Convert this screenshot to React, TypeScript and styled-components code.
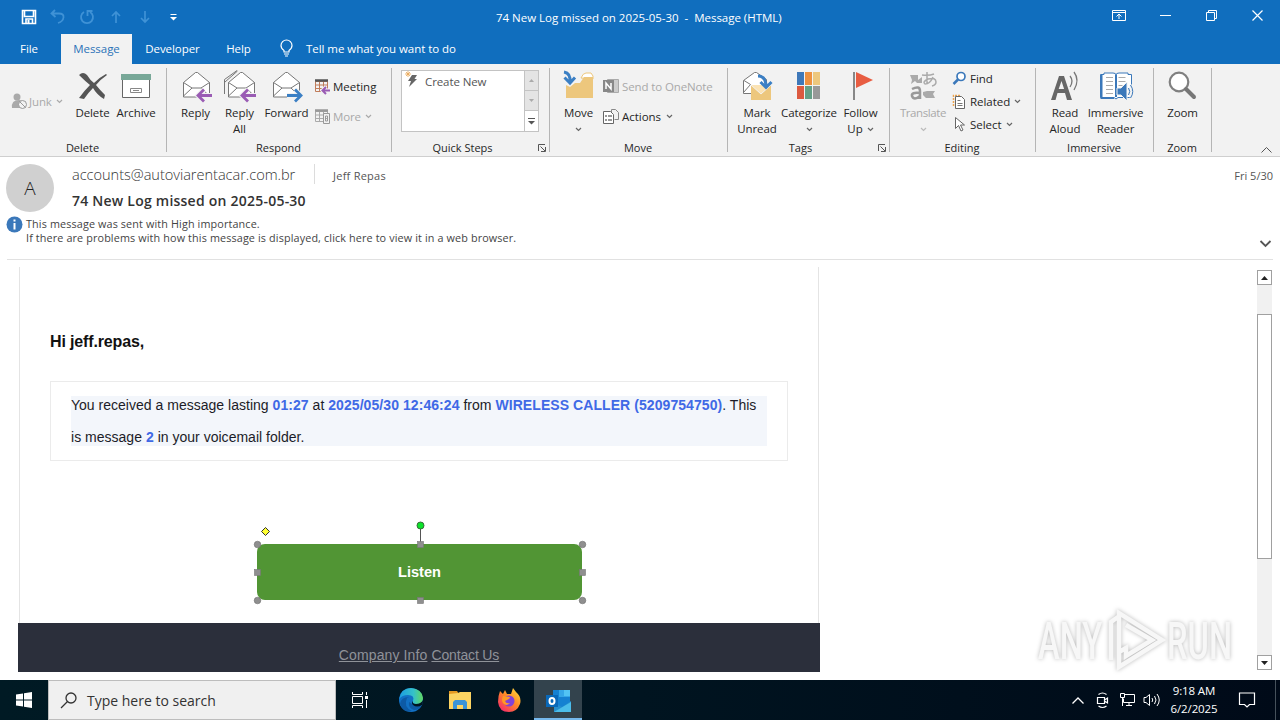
import type { ReactNode } from "react";
import styled, { createGlobalStyle, css } from "styled-components";

const GlobalStyle = createGlobalStyle`
  * {
    box-sizing: border-box;
  }

  body {
    margin: 0;
    background: #fff;
    font-family: "Open Sans", "Noto Sans", sans-serif;
    font-size: 12px;
    color: #262626;
  }

  svg {
    display: block;
    flex: none;
    overflow: visible;
  }
`;

const Window = styled.div`
  position: relative;
  display: flex;
  flex-direction: column;
  width: 1280px;
  height: 720px;
  overflow: hidden;
  white-space: nowrap;
`;

const TitleBar = styled.header`
  display: grid;
  grid-template-columns: 400px 1fr 400px;
  align-items: center;
  height: 34px;
  background: #106ebe;
  color: #fff;
`;

const QuickAccess = styled.div`
  display: flex;
  align-items: center;
  gap: 13px;
  padding-left: 21px;
`;

const WindowTitle = styled.div`
  padding-left: 96px;
  font-size: 11.5px;
  letter-spacing: -0.02px;
`;

const WindowControls = styled.div`
  display: flex;
  align-self: start;
  justify-content: flex-end;
  height: 30px;

  > * {
    display: grid;
    place-items: center;
    width: 46px;
  }
`;

const Tabs = styled.nav`
  display: flex;
  height: 30px;
  background: #106ebe;
  color: #fff;
  font-size: 11.5px;
  letter-spacing: -0.05px;
`;

const Tab = styled.div<{ $width: number; $active?: boolean }>`
  display: flex;
  align-items: center;
  justify-content: center;
  width: ${(p) => p.$width}px;
  padding-bottom: 2px;

  ${(p) =>
    p.$active &&
    css`
      background: #f2f2f2;
      color: #2b72b8;
    `}
`;

const TellMe = styled.div`
  display: flex;
  align-items: center;
  gap: 12px;
  padding: 0 0 2px 15px;
`;

const Ribbon = styled.section`
  display: flex;
  height: 93px;
  border-bottom: 1px solid #cfcfcf;
  background: #f2f2f2;
`;

const Group = styled.div<{ $width: number }>`
  position: relative;
  display: flex;
  flex-direction: column;
  width: ${(p) => p.$width}px;
  height: 84px;
  margin-top: 4px;
  border-right: 1px solid #b5b5b5;
`;

const GroupBody = styled.div<{ $indent: number }>`
  display: flex;
  height: 72px;
  padding: 2px 0 0 ${(p) => p.$indent}px;
`;

const GroupLabel = styled.div<{ $launcher?: boolean }>`
  height: 12px;
  padding-right: ${(p) => (p.$launcher ? 16 : 1)}px;
  font-size: 11px;
  line-height: 15px;
  text-align: center;
`;

const Launcher = styled.svg`
  position: absolute;
  right: 3px;
  bottom: 0;
`;

const BigButton = styled.div<{ $width: number; $disabled?: boolean }>`
  display: flex;
  flex-direction: column;
  align-items: center;
  width: ${(p) => p.$width}px;
  font-size: 11.5px;
  line-height: 16px;
  text-align: center;
  letter-spacing: ${(p) => (p.$disabled ? -0.4 : -0.08)}px;
  color: ${(p) => (p.$disabled ? "#a9a9a9" : "#262626")};

  > svg {
    margin-bottom: 3px;
  }
`;

const ButtonLine = styled.span`
  display: flex;
  align-items: center;
  justify-content: center;
  gap: 4px;
  height: 16px;
`;

const SmallColumn = styled.div<{ $row: number; $top: number; $width?: number; $indent?: number }>`
  display: flex;
  flex-direction: column;
  width: ${(p) => (p.$width ? `${p.$width}px` : "auto")};
  margin: ${(p) => p.$top}px 0 0 ${(p) => p.$indent ?? 0}px;

  > * {
    height: ${(p) => p.$row}px;
  }
`;

const SmallButton = styled.div<{ $disabled?: boolean; $tight?: boolean }>`
  display: flex;
  align-items: center;
  gap: ${(p) => (p.$tight ? 2 : 3)}px;
  font-size: 11.5px;
  letter-spacing: ${(p) => (p.$disabled ? -0.12 : -0.03)}px;
  color: ${(p) => (p.$disabled ? "#a9a9a9" : "#262626")};

  > svg:last-child:not(:first-child) {
    margin-left: 2px;
  }
`;

const QuickSteps = styled.div`
  display: flex;
  width: 138px;
  height: 62px;
  border: 1px solid #c3c3c3;
  background: #fff;
`;

const QuickStep = styled.div`
  display: flex;
  flex: 1;
  gap: 7px;
  padding-left: 3px;
  color: #555;
  font-size: 11.5px;
  letter-spacing: -0.1px;
  line-height: 22px;
`;

const Spinner = styled.div`
  display: grid;
  grid-template-rows: 20px 20px 1fr;
  width: 14px;
  border-left: 1px solid #c3c3c3;

  > div {
    display: grid;
    place-items: center;
    background: #e4e4e4;
    border-bottom: 1px solid #c3c3c3;
  }

  > div:last-child {
    background: #fff;
    border-bottom: 0;
  }
`;

const Collapse = styled.div`
  display: flex;
  flex: 1;
  align-items: flex-end;
  justify-content: flex-end;
  padding: 0 8px 3px 0;
`;

const MessageHeader = styled.section`
  display: flex;
  flex-direction: column;
  height: 103px;
  margin: 0 7px;
  padding-top: 7px;
  border-bottom: 1px solid #e1e1e1;
`;

const Sender = styled.div`
  display: flex;
  height: 49px;
`;

const Avatar = styled.div`
  display: grid;
  place-items: center;
  width: 48px;
  height: 48px;
  margin-left: -1px;
  border-radius: 50%;
  background: #d0d0d0;
  color: #222;
  font-size: 19px;
  font-weight: 300;
`;

const SenderLines = styled.div`
  flex: 1;
  margin-left: 18px;
`;

const FromLine = styled.div`
  display: flex;
  height: 22px;
  color: #555;
`;

const From = styled.span`
  width: 242px;
  font-size: 14.6px;
  font-weight: 300;
  line-height: 21px;
  letter-spacing: -0.04px;
  color: #333;
`;

const To = styled.span`
  flex: 1;
  height: 20px;
  padding-left: 18px;
  border-left: 1px solid #dcdcdc;
  font-size: 11px;
  line-height: 24px;
  letter-spacing: 0.25px;
`;

const SentOn = styled.span`
  font-size: 11px;
  line-height: 24px;
`;

const Subject = styled.div`
  font-size: 14px;
  font-weight: 600;
  line-height: 30px;
  letter-spacing: 0.23px;
  color: #333;
`;

const InfoBar = styled.div`
  display: flex;
  gap: 4px;
  margin-top: 4px;
  color: #444;
  font-size: 10.8px;
  line-height: 14px;
  letter-spacing: 0.13px;
`;

const InfoText = styled.div`
  flex: 1;
`;

const ExpandSlot = styled.div`
  align-self: flex-end;
  height: 5px;
  padding-right: 2px;
`;

const ReadingPane = styled.main`
  display: flex;
  height: 420px;
  padding: 7px 7px 8px 18px;
  font-family: "Liberation Sans", Arial, sans-serif;
`;

const Mail = styled.article`
  display: flex;
  flex-direction: column;
  width: 802px;
`;

const MailBody = styled.div`
  flex: 1;
  margin: 0 1px;
  padding: 66px 30px 0;
  border: solid #e4e4e4;
  border-width: 0 1px;
`;

const Greeting = styled.h1`
  margin: 0;
  color: #111;
  font-size: 16px;
  line-height: 18px;
  letter-spacing: -0.15px;
`;

const Notice = styled.div`
  height: 80px;
  margin-top: 30px;
  padding: 14px 20px 0;
  border: 1px solid #ebebeb;
`;

const NoticeFill = styled.div`
  display: flow-root;
  height: 50px;
  background: #f3f6fb;
`;

const NoticeText = styled.p`
  margin: -7px 0 0;
  color: #1c1c28;
  font-size: 14px;
  line-height: 32px;
  letter-spacing: 0.015px;

  b {
    color: #3f69e6;
    letter-spacing: 0.07px;
  }
`;

const ListenButton = styled.div`
  position: relative;
  width: 325px;
  height: 56px;
  margin: 83px 0 0 207px;
  border-radius: 8px;
  background: #519534;
  color: #fff;
  font-size: 14.6px;
  font-weight: bold;
  line-height: 56px;
  text-align: center;
`;

const Selection = styled.svg`
  position: absolute;
  left: -6px;
  top: -24px;
`;

const MailFooter = styled.footer`
  display: flex;
  justify-content: center;
  gap: 4px;
  height: 49px;
  background: #2b2f3b;
  color: #8f9299;
  font-size: 14px;
  line-height: 64px;
  text-decoration: underline;
`;

const FooterLink = styled.span<{ $spacing: number }>`
  letter-spacing: ${(p) => p.$spacing}px;
`;

const Scrollbar = styled.div`
  display: flex;
  flex-direction: column;
  width: 15px;
  height: 400px;
  margin: 3px 1px 0 auto;
  background: #f1f1f1;
`;

const ScrollArrow = styled.div`
  display: grid;
  place-items: center;
  height: 15px;
  border: 1px solid #a0a0a0;
  background: #fff;
`;

const ScrollThumb = styled.div`
  height: 245px;
  margin: 29px 0 auto;
  border: 1px solid #a0a0a0;
  background: #fff;
`;

const Watermark = styled.div`
  position: absolute;
  left: 1038px;
  top: 608px;
  display: flex;
  width: 198px;
  height: 66px;
  filter: drop-shadow(0 0 2px rgba(0, 0, 0, 0.28));
`;

const WatermarkWord = styled.span<{ $width: number; $scale: number }>`
  display: block;
  width: ${(p) => p.$width}px;
  color: #f7f7f7;
  font-family: Roboto, sans-serif;
  font-size: 51px;
  font-weight: 500;
  line-height: 67px;

  > span {
    display: inline-block;
    transform: scaleX(${(p) => p.$scale});
    transform-origin: 0 0;
  }
`;

const Taskbar = styled.footer`
  display: flex;
  height: 40px;
  background: linear-gradient(90deg, #001a24, #001420 50%, #000a18);
  color: #fff;
`;

const TaskItem = styled.div<{ $width: number; $active?: boolean }>`
  display: grid;
  place-items: center;
  width: ${(p) => p.$width}px;
  ${(p) =>
    p.$active &&
    css`
      padding-top: 2px;
      background: #33434d;
      border-bottom: 2px solid #76b9ed;
    `}
`;

const SearchBox = styled.div`
  display: flex;
  align-items: center;
  gap: 10px;
  width: 288px;
  padding-left: 11px;
  border: 1px solid #bdbdbd;
  background: #f0f0f0;
  color: #333;
  font-size: 14px;
`;

const Tray = styled.div`
  display: flex;
  align-items: center;
  margin-left: auto;
  padding-right: 4px;
`;

const TrayIcon = styled.div<{ $width: number }>`
  display: grid;
  place-items: center;
  width: ${(p) => p.$width}px;
`;

const Clock = styled.div`
  width: 62px;
  font-size: 11.5px;
  line-height: 18px;
  letter-spacing: -0.12px;
  text-align: center;
`;

const ShowDesktop = styled.div`
  height: 40px;
  border-left: 1px solid #46515b;
`;

type IconProps = { w?: number; h?: number; children: ReactNode };

// Stroke icon on its own pixel grid
const Icon = ({ w = 16, h = w, children }: IconProps) => (
  <svg width={w} height={h} viewBox={`0 0 ${w} ${h}`} fill="none" stroke="currentColor">
    {children}
  </svg>
);

const Chevron = ({ color = "#666" }: { color?: string }) => (
  <svg width="7" height="5" viewBox="0 0 7 5" fill="none" stroke={color} strokeWidth="1.2">
    <path d="M1 1l2.5 2.5L6 1" />
  </svg>
);

const LauncherIcon = () => (
  <Launcher width="8" height="8" viewBox="0 0 8 8" fill="none" stroke="#555">
    <path d="M.5 7V.5H7M2.5 2.5L7 7M7.5 3v4.5H3" />
  </Launcher>
);

const Envelope = ({ x = 0 }: { x?: number }) => (
  <g transform={`translate(${x} 0)`} stroke="#777">
    <path d="M3.5 12.5l12-10h2l12 10V27h-26z" fill="#fff" />
    <path d="M3.5 12.5l8.5 5.5h9l8.5-5.5M3.5 26l8.5-8M29.5 26L21 18" />
  </g>
);

const ReplyIcon = ({ all }: { all?: boolean }) => (
  <Icon w={32}>
    {all && <path d="M.5 24V9.5L13 .5M1 12L13.5 1" stroke="#777" />}
    <Envelope x={all ? 1 : 0} />
    <path d="M32 25.5H18M24 19.5l-6 6 6 6" stroke="#f2f2f2" strokeWidth="5" />
    <path d="M32 25.5H18M24 19.5l-6 6 6 6" stroke="#9a5cb4" strokeWidth="2.8" />
  </Icon>
);

const ForwardIcon = () => (
  <Icon w={32}>
    <Envelope x={-1} />
    <path d="M16 25.5h14M24 19.5l6 6-6 6" stroke="#f2f2f2" strokeWidth="5" />
    <path d="M16 25.5h14M24 19.5l6 6-6 6" stroke="#3b7fc4" strokeWidth="2.8" />
  </Icon>
);

const FolderIcon = () => (
  <Icon w={32}>
    <path d="M18 8q2-5 5-5h5l2 3v3z" fill="#fff" stroke="#edc77d" />
    <path d="M3 15l4 2 5-4h5l4-6h9v21H3z" fill="#edc77d" stroke="none" />
    <path d="M1 2q7 1 6 11M1.5 7.500L7 13l5-5.500" stroke="#3b7fc4" strokeWidth="3" />
  </Icon>
);

const CalendarIcon = ({ muted }: { muted?: boolean }) => (
  <Icon>
    <path d="M.5 3.5h12v10H.5zM.5 7h12M.5 10.5h12M4.5 4v9.5M8.5 4v9.5" stroke={muted ? "#aaa" : "#c07c5a"} />
    <path d="M0 2.5h13" stroke={muted ? "#999" : "#555"} strokeWidth="2.5" />
    {muted ? (
      <path d="M8.5 5.5h6v10h-6zM10.5 8v5h2V8z" fill="#f2f2f2" stroke="#999" />
    ) : (
      <>
        <path d="M15 12.5H8M11 9l-3.500 3.500L11 16" stroke="#f2f2f2" strokeWidth="4" />
        <path d="M15 12.5H8M11 9l-3.500 3.500L11 16" stroke="#9a5cb4" strokeWidth="2" />
      </>
    )}
  </Icon>
);

function Title() {
  return (
    <TitleBar>
      <QuickAccess>
        <Icon>
          <path d="M1.5 1.5h13v13h-13zM3.5 2v5.5h9V2M5 14v-4h6.500v4" strokeWidth="1.600" />
          <path d="M6.5 11h2v3h-2z" fill="#fff" stroke="none" />
        </Icon>
        <Icon>
          <path d="M5 1L1.5 4.5 5.5 8M1.5 4.5H9q5 0 4.5 4T8 14" stroke="#3f92d6" strokeWidth="1.800" />
        </Icon>
        <Icon>
          <path d="M5 3A6 6 0 1 0 11 3M13.5 2H8.500v5" stroke="#3f92d6" strokeWidth="1.800" />
        </Icon>
        <Icon>
          <path d="M8 14V3M4 7l4-4 4 4" stroke="#3f92d6" strokeWidth="1.700" />
        </Icon>
        <Icon>
          <path d="M8 2v11M4 9l4 4 4-4" stroke="#3f92d6" strokeWidth="1.700" />
        </Icon>
        <Icon>
          <path d="M4.5 5.5h6" />
          <path d="M4 8h7l-3.500 3.500z" fill="#fff" stroke="none" />
        </Icon>
      </QuickAccess>
      <WindowTitle>74 New Log missed on 2025-05-30 &nbsp;- &nbsp;Message (HTML)</WindowTitle>
      <WindowControls>
        <div>
          <Icon w={14} h={11}>
            <path d="M.5.5h13v10H.5zM.5 2.5h13M7 9V4.5M4.5 6.5L7 4l2.500 2.500" />
          </Icon>
        </div>
        <div>
          <Icon w={11}>
            <path d="M0 5.5h11" />
          </Icon>
        </div>
        <div>
          <Icon w={11}>
            <path d="M.5 2.5h8v8h-8zM2.5 2.5v-2h8v8h-2" />
          </Icon>
        </div>
        <div>
          <Icon w={11}>
            <path d="M.5.5l10 10M10.5.5l-10 10" strokeWidth="1.200" />
          </Icon>
        </div>
      </WindowControls>
    </TitleBar>
  );
}

function RibbonTabs() {
  return (
    <Tabs>
      <Tab $width={58}>File</Tab>
      <Tab $width={3} />
      <Tab $width={71} $active>
        Message
      </Tab>
      <Tab $width={81}>Developer</Tab>
      <Tab $width={51}>Help</Tab>
      <TellMe>
        <Icon w={15} h={16}>
          <path d="M5 12v-1.500Q2 8.500 2 5.500a5.500 5.500 0 0 1 11 0q0 3-3 5V12zM5 14h5M6 16h3" strokeWidth="1.200" />
        </Icon>
        Tell me what you want to do
      </TellMe>
    </Tabs>
  );
}

function RibbonGroups() {
  return (
    <Ribbon>
      <Group $width={167}>
        <GroupBody $indent={11}>
          <SmallColumn $row={62} $top={0} $width={61}>
            <SmallButton $disabled $tight>
              <Icon>
                <path d="M8 7q4 0 4 3v5H1q-1-8 7-8" fill="#aaa" stroke="none" />
                <circle cx="6" cy="4" r="3.500" fill="#aaa" stroke="none" />
                <circle cx="11.500" cy="11.500" r="4" fill="#f2f2f2" stroke="#999" />
                <path d="M8.5 8.5l6 6" stroke="#999" />
              </Icon>
              Junk
              <Chevron color="#aaa" />
            </SmallButton>
          </SmallColumn>
          <BigButton $width={41}>
            <Icon w={32}>
              <path
                d="M2 5q4-4 8 0 3 5 7 8 6-6 12-9l1 1q-6 4-11 10 4 5 9 10l-1 4q-7-4-11-11-5 5-9 11l-5-1q5-7 11-13-5-4-11-10"
                fill="#555"
                stroke="none"
              />
            </Icon>
            <ButtonLine>Delete</ButtonLine>
          </BigButton>
          <BigButton $width={46}>
            <Icon w={32}>
              <path d="M2.500 9v18.500h27V9" fill="#fff" stroke="#666" />
              <path d="M1 4h30v6H1z" fill="#78a898" stroke="none" />
              <path d="M10.500 18.500h11v4h-11zM13 20.500h6" stroke="#888" />
            </Icon>
            <ButtonLine>Archive</ButtonLine>
          </BigButton>
        </GroupBody>
        <GroupLabel>Delete</GroupLabel>
      </Group>

      <Group $width={225}>
        <GroupBody $indent={7}>
          <BigButton $width={43}>
            <ReplyIcon />
            <ButtonLine>Reply</ButtonLine>
          </BigButton>
          <BigButton $width={45}>
            <ReplyIcon all />
            <ButtonLine>Reply</ButtonLine>
            <ButtonLine>All</ButtonLine>
          </BigButton>
          <BigButton $width={49}>
            <ForwardIcon />
            <ButtonLine>Forward</ButtonLine>
          </BigButton>
          <SmallColumn $row={30} $top={1} $indent={4}>
            <SmallButton $tight>
              <CalendarIcon />
              Meeting
            </SmallButton>
            <SmallButton $disabled $tight>
              <CalendarIcon muted />
              More
              <Chevron color="#aaa" />
            </SmallButton>
          </SmallColumn>
        </GroupBody>
        <GroupLabel>Respond</GroupLabel>
      </Group>

      <Group $width={158}>
        <GroupBody $indent={9}>
          <QuickSteps>
            <QuickStep>
              <Icon w={13} h={18}>
                <path d="M7 4h5L9.500 8H12L4 16l2-6H3z" fill="#666" stroke="none" />
                <path d="M3 0v6M0 3h6M1 1l4 4M5 1L1 5" stroke="#e8a552" strokeWidth=".8" />
              </Icon>
              Create New
            </QuickStep>
            <Spinner>
              <div>
                <Icon w={5} h={3}>
                  <path d="M0 3h5L2.500 0z" fill="#aaa" stroke="none" />
                </Icon>
              </div>
              <div>
                <Icon w={5} h={3}>
                  <path d="M0 0h5L2.500 3z" fill="#aaa" stroke="none" />
                </Icon>
              </div>
              <div>
                <Icon w={7} h={7}>
                  <path d="M0 .5h7" stroke="#555" />
                  <path d="M0 3h7L3.500 6.500z" fill="#555" stroke="none" />
                </Icon>
              </div>
            </Spinner>
          </QuickSteps>
        </GroupBody>
        <GroupLabel $launcher>Quick Steps</GroupLabel>
        <LauncherIcon />
      </Group>

      <Group $width={178}>
        <GroupBody $indent={7}>
          <BigButton $width={43}>
            <FolderIcon />
            <ButtonLine>Move</ButtonLine>
            <ButtonLine>
              <Chevron />
            </ButtonLine>
          </BigButton>
          <SmallColumn $row={30} $top={1} $indent={3}>
            <SmallButton $disabled>
              <Icon>
                <path d="M4.500 1.500h11v13h-11z" fill="#ccc" stroke="#aaa" />
                <path d="M0 2h11v12H0z" fill="#888" stroke="none" />
                <path d="M3 11V5l5 6V5" stroke="#fff" strokeWidth="1.500" />
              </Icon>
              Send to OneNote
            </SmallButton>
            <SmallButton>
              <Icon>
                <path d="M8.500 4V1.500h4l3 3v7h-4" stroke="#888" />
                <path d="M.5 3.500h7l3 3v9H.500z" fill="#fff" stroke="#666" />
                <path d="M2 8h2M5 8h4M2 12h2M5 12h4" stroke="#777" strokeWidth="1.500" />
              </Icon>
              Actions
              <Chevron />
            </SmallButton>
          </SmallColumn>
        </GroupBody>
        <GroupLabel>Move</GroupLabel>
      </Group>

      <Group $width={162}>
        <GroupBody $indent={7}>
          <BigButton $width={44}>
            <Icon w={32}>
              <path d="M2.500 23.500V10.500l11-8h2l10 7v14z" fill="#fff" stroke="#777" />
              <path d="M2.500 22.500l7-8-6.500-4" stroke="#777" />
              <path d="M10 15h20v15H10z" fill="#edc77d" stroke="none" />
              <path d="M10 15l10 9 10-9" fill="#fbe3b4" stroke="#f2f2f2" />
              <path d="M17 6q8 0 8 11M19.500 12l5.500 5.500 5.500-5.500" stroke="#3b7fc4" strokeWidth="3" />
            </Icon>
            <ButtonLine>Mark</ButtonLine>
            <ButtonLine>Unread</ButtonLine>
          </BigButton>
          <BigButton $width={60}>
            <svg width="32" height="32" viewBox="0 0 32 32">
              <path fill="#3e78b9" d="M4 2h7v13H4z" />
              <path fill="#ed9140" d="M12 2h7v13h-7z" />
              <path fill="#edc77d" d="M20 2h7v13h-7z" />
              <path fill="#dc5a40" d="M4 16h7v13H4z" />
              <path fill="#65a087" d="M12 16h7v13h-7z" />
              <path fill="#999" d="M20 16h7v13h-7z" />
            </svg>
            <ButtonLine>Categorize</ButtonLine>
            <ButtonLine>
              <Chevron />
            </ButtonLine>
          </BigButton>
          <BigButton $width={43}>
            <Icon w={32}>
              <path d="M9 2v28" stroke="#888" strokeWidth="2" />
              <path d="M11 2l17 8-17 8z" fill="#e85d42" stroke="none" />
            </Icon>
            <ButtonLine>Follow</ButtonLine>
            <ButtonLine>
              Up
              <Chevron />
            </ButtonLine>
          </BigButton>
        </GroupBody>
        <GroupLabel $launcher>Tags</GroupLabel>
        <LauncherIcon />
      </Group>

      <Group $width={146}>
        <GroupBody $indent={6}>
          <BigButton $width={54} $disabled>
            <Icon w={32}>
              <path d="M3 5h8v5l4-3v6h-5l-2-2-4 3 1-4zM20 21h8l-2 3 2 4h-9l-3-3v-3z" fill="#aaa" stroke="none" />
              <path d="M15 5q7 1 12-1M20 2v12M26 7q-3 7-8 7-3-2 3-5 8-2 8 3 0 3-4 4" stroke="#aaa" strokeWidth="1.500" />
              <path d="M5 19q8-4 8 2v8M13 23q-9-1-8 3 2 5 8 0" stroke="#999" strokeWidth="2.500" />
            </Icon>
            <ButtonLine>Translate</ButtonLine>
            <ButtonLine>
              <Chevron color="#bbb" />
            </ButtonLine>
          </BigButton>
          <SmallColumn $row={23} $top={-3} $indent={2}>
            <SmallButton $tight>
              <Icon>
                <circle cx="9" cy="5.500" r="4" stroke="#3b78ba" strokeWidth="1.700" fill="#fff" />
                <path d="M6 8.500L1.500 13" stroke="#3b78ba" strokeWidth="2.500" />
              </Icon>
              Find
            </SmallButton>
            <SmallButton $tight>
              <Icon>
                <path d="M1.500 12V1.500H9" stroke="#eba450" strokeWidth="1.500" strokeDasharray="2 1" />
                <path d="M3.500 2.500h6l3 3v9h-9z" fill="#fff" stroke="#666" />
                <path d="M5.500 6.500h3M5.500 9.500h5M5.500 11.500h5" stroke="#777" />
              </Icon>
              Related
              <Chevron />
            </SmallButton>
            <SmallButton $tight>
              <Icon>
                <path d="M3.500.500v11l3-3 2.500 5.500 2-1-2.500-5h4z" fill="#fff" stroke="#666" />
              </Icon>
              Select
              <Chevron />
            </SmallButton>
          </SmallColumn>
        </GroupBody>
        <GroupLabel>Editing</GroupLabel>
      </Group>

      <Group $width={118}>
        <GroupBody $indent={6}>
          <BigButton $width={46}>
            <Icon w={32}>
              <path d="M2 30L10 6h5l8 24h-5l-2-7H8.500l-2 7zM9.700 19h5.400L12.500 11z" fill="#666" fillRule="evenodd" stroke="none" />
              <path d="M21 6q4 5 0 11M25 2q6 8 0 18" stroke="#777" strokeWidth="1.300" />
            </Icon>
            <ButtonLine>Read</ButtonLine>
            <ButtonLine>Aloud</ButtonLine>
          </BigButton>
          <BigButton $width={55}>
            <Icon w={32}>
              <path d="M.5 4.500H4V3h9q3 0 3 2 0-2 3-2h9v1.500h3.500v23H18l-2 1.500-2-1.500H.500z" fill="#fff" stroke="#3b78ba" />
              <path d="M1.500 5v23H14M16 5v22" stroke="#3b78ba" strokeWidth="2" />
              <path d="M6 7.500h7M6 11.500h7M6 15.500h7M6 19.500h7M6 23.500h7M18.500 7.500h7M18.500 11.500h7M18.500 15.500h4" stroke="#aaa" />
              <path d="M17 18h4l6-6v19l-6-6h-4z" fill="#3b78ba" stroke="#f2f2f2" />
              <path d="M28.500 18q2.500 3.500 0 7M30.500 15q4.500 6.500 0 13" stroke="#f2f2f2" strokeWidth="3" />
              <path d="M28.500 18q2.500 3.500 0 7M30.500 15q4.500 6.500 0 13" stroke="#3b78ba" />
            </Icon>
            <ButtonLine>Immersive</ButtonLine>
            <ButtonLine>Reader</ButtonLine>
          </BigButton>
        </GroupBody>
        <GroupLabel>Immersive</GroupLabel>
      </Group>

      <Group $width={58}>
        <GroupBody $indent={5}>
          <BigButton $width={47}>
            <Icon w={32}>
              <circle cx="12" cy="12" r="9.300" fill="#fff" stroke="#808080" strokeWidth="2.200" />
              <path d="M19 19l8 8" stroke="#777" strokeWidth="4" strokeLinecap="round" />
            </Icon>
            <ButtonLine>Zoom</ButtonLine>
          </BigButton>
        </GroupBody>
        <GroupLabel>Zoom</GroupLabel>
      </Group>

      <Collapse>
        <Icon w={11} h={6}>
          <path d="M.5 5.500l5-5 5 5" stroke="#555" />
        </Icon>
      </Collapse>
    </Ribbon>
  );
}

function Header() {
  return (
    <MessageHeader>
      <Sender>
        <Avatar>A</Avatar>
        <SenderLines>
          <FromLine>
            <From>accounts@autoviarentacar.com.br</From>
            <To>Jeff Repas</To>
            <SentOn>Fri 5/30</SentOn>
          </FromLine>
          <Subject>74 New Log missed on 2025-05-30</Subject>
        </SenderLines>
      </Sender>
      <InfoBar>
        <Icon w={15}>
          <circle cx="7.500" cy="7.500" r="8" fill="#3b78ba" stroke="none" />
          <path d="M7.500 6v6.500M7.500 2.500v2" stroke="#fff" strokeWidth="2" />
        </Icon>
        <InfoText>
          This message was sent with High importance.
          <br />
          If there are problems with how this message is displayed, click here to view it in a web browser.
        </InfoText>
        <ExpandSlot>
          <Icon w={11} h={7}>
            <path d="M.5 1l5 5 5-5" stroke="#555" strokeWidth="1.800" />
          </Icon>
        </ExpandSlot>
      </InfoBar>
    </MessageHeader>
  );
}

const HANDLES = [6, 169, 331].flatMap((x) => [24, 52, 80].map((y) => ({ x, y })));

function Message() {
  return (
    <ReadingPane>
      <Mail>
        <MailBody>
          <Greeting>Hi jeff.repas,</Greeting>
          <Notice>
            <NoticeFill>
              <NoticeText>
                You received a message lasting <b>01:27</b> at <b>2025/05/30 12:46:24</b> from{" "}
                <b>WIRELESS CALLER (5209754750)</b>. This
                <br />
                is message <b>2</b> in your voicemail folder.
              </NoticeText>
            </NoticeFill>
          </Notice>
          <ListenButton>
            Listen
            <Selection width="338" height="88" viewBox="0 0 338 88">
              <path d="M169.500 9v15" stroke="#555" />
              <circle cx="169.500" cy="5.500" r="3.500" fill="#0be32a" stroke="#376b37" />
              <path d="M14.500 7.500l4 4-4 4-4-4z" fill="#ff3" stroke="#333" />
              {HANDLES.map(({ x, y }) =>
                x !== 169 && y !== 52 ? (
                  <circle key={`${x}-${y}`} cx={x + 0.5} cy={y + 0.5} r="3.300" fill="#8f8f8f" stroke="#6f6f6f" strokeWidth=".6" />
                ) : x === 169 && y === 52 ? null : (
                  <rect key={`${x}-${y}`} x={x - 2.5} y={y - 2.5} width="6" height="6" fill="#8f8f8f" stroke="#777" strokeWidth=".6" />
                )
              )}
            </Selection>
          </ListenButton>
        </MailBody>
        <MailFooter>
          <FooterLink $spacing={0.12}>Company Info</FooterLink>
          <FooterLink $spacing={-0.15}>Contact Us</FooterLink>
        </MailFooter>
      </Mail>
      <Scrollbar>
        <ScrollArrow>
          <Icon w={7} h={4}>
            <path d="M0 4h7L3.500 0z" fill="#222" stroke="none" />
          </Icon>
        </ScrollArrow>
        <ScrollThumb />
        <ScrollArrow>
          <Icon w={7} h={4}>
            <path d="M0 0h7L3.500 4z" fill="#222" stroke="none" />
          </Icon>
        </ScrollArrow>
      </Scrollbar>
    </ReadingPane>
  );
}

function AnyRun() {
  return (
    <Watermark>
      <WatermarkWord $width={69} $scale={0.64}>
        <span>ANY</span>
      </WatermarkWord>
      <Icon w={60} h={66}>
        <path d="M4 52V14l7-5M12 44V5l43 27-43 27V44l7-4v8l26-16L19 17" stroke="#f7f7f7" strokeWidth="4.500" />
      </Icon>
      <WatermarkWord $width={66} $scale={0.64}>
        <span>RUN</span>
      </WatermarkWord>
    </Watermark>
  );
}

function WindowsTaskbar() {
  return (
    <Taskbar>
      <TaskItem $width={48}>
        <Icon>
          <path d="M0 2.500L7 1.500V7.500H0zM8 1.300L16 0v7.500H8zM0 8.500h7v6L0 13.500zM8 8.500h8V16L8 14.700z" fill="#fff" stroke="none" />
        </Icon>
      </TaskItem>
      <SearchBox>
        <Icon w={17}>
          <circle cx="11" cy="6" r="5" strokeWidth="1.300" />
          <path d="M7.500 9.500L1 16" strokeWidth="1.300" />
        </Icon>
        Type here to search
      </SearchBox>
      <TaskItem $width={48}>
        <Icon>
          <path d="M.5 0v2.500h10V0M.5 16v-2.500h10V16M.5 4.500h10v7H.500zM14.500 0v3M14.500 8v8" />
          <path d="M13 4h3v3h-3z" fill="#fff" stroke="none" />
        </Icon>
      </TaskItem>
      <TaskItem $width={53}>
        <svg width="24" height="24" viewBox="0 0 24 24">
          <defs>
            <linearGradient id="edgeTop" x1="0" x2="1">
              <stop offset="0" stopColor="#1b9de2" />
              <stop offset=".6" stopColor="#35c1c9" />
              <stop offset="1" stopColor="#62d860" />
            </linearGradient>
          </defs>
          <circle cx="12" cy="12" r="12" fill="#1271c5" />
          <path d="M.2 11Q2 0 12 0q11 1 12 10 0 6-7 6-4 0-3-3 2-6-5-6Q3 7 .2 11" fill="url(#edgeTop)" />
          <path d="M8 10q-4 9 5 13-9 2-12-7 1-7 9-7zm5 6q4 4 10 1-3 5-8 5-6-2-5-8z" fill="#0d5aa5" />
          <path d="M14 13q-1 3 3 3 5 0 7-4 0 3-1 5-5 3-9 0-2-2 0-4" fill="#001420" />
        </svg>
      </TaskItem>
      <TaskItem $width={46}>
        <svg width="22" height="20" viewBox="0 0 22 20">
          <path d="M0 1h8l2 3H0z" fill="#e59a22" />
          <path d="M0 4l9-1 2-1h11v17H0z" fill="#fcd462" />
          <path d="M4 19v-7l2-2h10l2 2v7h-4v-4H8v4z" fill="#3a94d7" />
        </svg>
      </TaskItem>
      <TaskItem $width={51}>
        <svg width="24" height="24" viewBox="0 0 24 24">
          <defs>
            <linearGradient id="fox" x1="1" x2=".2" y2="1">
              <stop offset="0" stopColor="#ffe640" />
              <stop offset=".5" stopColor="#ff8a26" />
              <stop offset="1" stopColor="#f4296b" />
            </linearGradient>
          </defs>
          <path d="M3 3l3 3 2-4 2 4h4l2-6 3 4q6 5 4 12-3 8-11 8-10 0-11-10 0-6 2-11" fill="url(#fox)" />
          <circle cx="12" cy="13" r="5.500" fill="#8142d8" />
          <path d="M6 8l7 1q0 2-3 3l-2 1q1 3 5 2-4 4-7 0-2-3 0-7" fill="#ff9a24" />
        </svg>
      </TaskItem>
      <TaskItem $width={48} $active>
        <svg width="25" height="23" viewBox="0 0 25 23">
          <path d="M7 1h17v17H7z" fill="#1581d2" />
          <path d="M13 1h11v7H13z" fill="#35a7e8" />
          <path d="M18 1h6v6h-6z" fill="#52c4f4" />
          <path d="M8 14l8 4 9-6v11H8z" fill="#258fce" />
          <path d="M8 23l17-10v10z" fill="#4cbdea" />
          <path d="M0 6h12v12H0z" fill="#0968b8" />
          <ellipse cx="6" cy="12" rx="2.500" ry="3" fill="none" stroke="#fff" strokeWidth="2" />
        </svg>
      </TaskItem>
      <Tray>
        <TrayIcon $width={24}>
          <Icon w={12} h={7}>
            <path d="M.5 6.500L6 1l5.500 5.500" strokeWidth="1.300" />
          </Icon>
        </TrayIcon>
        <TrayIcon $width={25}>
          <Icon w={13} h={16}>
            <path d="M1.500 5.500h7v6h-7zM8.500 8l3-2v5l-3-2M2.500 2.500q4-3 8 0M2.500 14q4 3 8 0" strokeWidth="1.200" />
          </Icon>
        </TrayIcon>
        <TrayIcon $width={24}>
          <Icon w={17} h={14}>
            <path d="M5 1.500h10.500v8H4.500v-4M1.500.500h4v4h-4zM3.500 5v8M10 10v2.500M7 12.500h6" />
          </Icon>
        </TrayIcon>
        <TrayIcon $width={24}>
          <Icon w={17} h={14}>
            <path d="M1 4.500h2l3.500-3v11L3 9.500H1zM9 5q1.500 2 0 4M11.500 3q3 4 0 8M14 1q4.500 6 0 12" />
          </Icon>
        </TrayIcon>
        <Clock>
          9:18 AM
          <br />
          6/2/2025
        </Clock>
        <TrayIcon $width={44}>
          <Icon w={16} h={16}>
            <path d="M.5 1h15v11.500h-5L8 15l-2.500-2.500h-5z" strokeWidth="1.200" />
          </Icon>
        </TrayIcon>
        <TrayIcon $width={6} />
        <ShowDesktop />
      </Tray>
    </Taskbar>
  );
}

export default function App() {
  return (
    <Window>
      <GlobalStyle />
      <Title />
      <RibbonTabs />
      <RibbonGroups />
      <Header />
      <Message />
      <WindowsTaskbar />
      <AnyRun />
    </Window>
  );
}
